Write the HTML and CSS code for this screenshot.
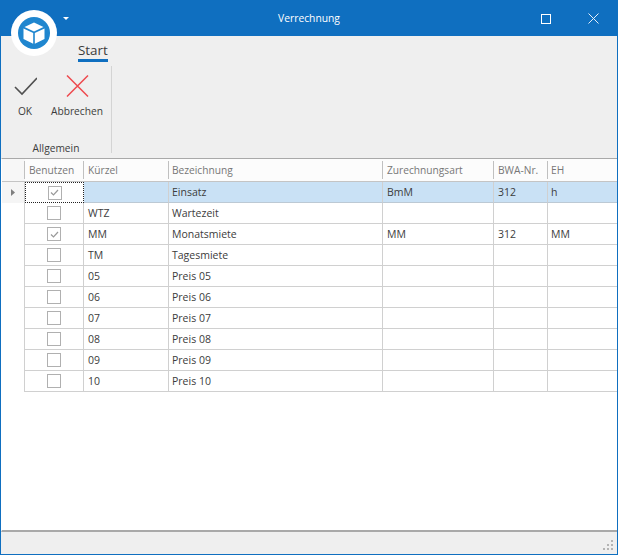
FILE: index.html
```html
<!DOCTYPE html>
<html lang="de">
<head>
  <meta charset="UTF-8" />
  <title>Verrechnung</title>
  <link rel="stylesheet" href="styles.css">
</head>
<body>
  <div class="window">
    <div class="titlebar">
      <svg class="qat-arrow" width="6" height="3" viewBox="0 0 6 3"><path d="M0 0h6L3 3z" fill="#fff"/></svg>
      <span class="title">Verrechnung</span>
      <div class="win-buttons">
        <svg width="10" height="10" viewBox="0 0 10 10"><rect x="0.5" y="0.5" width="9" height="9" fill="none" stroke="#fff"/></svg>
        <svg width="11" height="11" viewBox="0 0 11 11"><path d="M0.5 0.5l10 10M10.5 0.5l-10 10" fill="none" stroke="#e4eef8" stroke-width="1"/></svg>
      </div>
    </div>

    <div class="logo">
      <svg width="46" height="46" viewBox="0 0 46 46">
        <circle cx="23" cy="23" r="23" fill="#fff"/>
        <circle cx="23" cy="23" r="16" fill="#1f86cf"/>
        <path d="M23 12.500l9.500 4.500-9.500 4.500-9.500-4.500z" fill="#fff"/>
        <path d="M12.500 18.500l9.700 4.600v10.600l-9.700-4.600z" fill="#fff"/>
        <path d="M33.500 18.500l-9.700 4.600v10.600l9.700-4.600z" fill="#fff"/>
      </svg>
    </div>

    <div class="ribbon">
      <div class="tabs"><span class="tab">Start</span></div>
      <div class="group">
        <div class="commands">
          <div class="command">
            <svg width="24" height="22" viewBox="0 0 24 22"><path d="M2 12l7 7L24 3" fill="none" stroke="#505050" stroke-width="1.600"/></svg>
            <span>OK</span>
          </div>
          <div class="command">
            <svg width="24" height="22" viewBox="0 0 24 22"><path d="M2 0.500l21 21M23 0.500l-21 21" fill="none" stroke="#ee4a4f" stroke-width="1.500"/></svg>
            <span>Abbrechen</span>
          </div>
        </div>
        <div class="group-label">Allgemein</div>
      </div>
    </div>

    <div class="grid">
      <div class="row head">
        <div class="cell indicator"></div>
        <div class="cell">Benutzen</div>
        <div class="cell">Kürzel</div>
        <div class="cell">Bezeichnung</div>
        <div class="cell">Zurechnungsart</div>
        <div class="cell">BWA-Nr.</div>
        <div class="cell">EH</div>
      </div>
      <div class="row selected">
        <div class="cell indicator"><svg width="4" height="7" viewBox="0 0 4 7"><path d="M0 0l4 3.500L0 7z" fill="#7f7f7f"/></svg></div>
        <div class="cell check focus"><span class="box"><svg width="11" height="11" viewBox="0 0 11 11"><path d="M2 5.500l2.500 2.500L9 3" fill="none" stroke="#999" stroke-width="1.200"/></svg></span></div>
        <div class="cell"></div>
        <div class="cell">Einsatz</div>
        <div class="cell">BmM</div>
        <div class="cell">312</div>
        <div class="cell">h</div>
      </div>
      <div class="row">
        <div class="cell indicator"></div>
        <div class="cell check"><span class="box"></span></div>
        <div class="cell">WTZ</div>
        <div class="cell">Wartezeit</div>
        <div class="cell"></div><div class="cell"></div><div class="cell"></div>
      </div>
      <div class="row">
        <div class="cell indicator"></div>
        <div class="cell check"><span class="box"><svg width="11" height="11" viewBox="0 0 11 11"><path d="M2 5.500l2.500 2.500L9 3" fill="none" stroke="#999" stroke-width="1.200"/></svg></span></div>
        <div class="cell">MM</div>
        <div class="cell">Monatsmiete</div>
        <div class="cell">MM</div>
        <div class="cell">312</div>
        <div class="cell">MM</div>
      </div>
      <div class="row">
        <div class="cell indicator"></div>
        <div class="cell check"><span class="box"></span></div>
        <div class="cell">TM</div>
        <div class="cell">Tagesmiete</div>
        <div class="cell"></div><div class="cell"></div><div class="cell"></div>
      </div>
      <div class="row">
        <div class="cell indicator"></div>
        <div class="cell check"><span class="box"></span></div>
        <div class="cell">05</div>
        <div class="cell">Preis 05</div>
        <div class="cell"></div><div class="cell"></div><div class="cell"></div>
      </div>
      <div class="row">
        <div class="cell indicator"></div>
        <div class="cell check"><span class="box"></span></div>
        <div class="cell">06</div>
        <div class="cell">Preis 06</div>
        <div class="cell"></div><div class="cell"></div><div class="cell"></div>
      </div>
      <div class="row">
        <div class="cell indicator"></div>
        <div class="cell check"><span class="box"></span></div>
        <div class="cell">07</div>
        <div class="cell">Preis 07</div>
        <div class="cell"></div><div class="cell"></div><div class="cell"></div>
      </div>
      <div class="row">
        <div class="cell indicator"></div>
        <div class="cell check"><span class="box"></span></div>
        <div class="cell">08</div>
        <div class="cell">Preis 08</div>
        <div class="cell"></div><div class="cell"></div><div class="cell"></div>
      </div>
      <div class="row">
        <div class="cell indicator"></div>
        <div class="cell check"><span class="box"></span></div>
        <div class="cell">09</div>
        <div class="cell">Preis 09</div>
        <div class="cell"></div><div class="cell"></div><div class="cell"></div>
      </div>
      <div class="row">
        <div class="cell indicator"></div>
        <div class="cell check"><span class="box"></span></div>
        <div class="cell">10</div>
        <div class="cell">Preis 10</div>
        <div class="cell"></div><div class="cell"></div><div class="cell"></div>
      </div>
    </div>

    <div class="statusbar">
      <div class="grip">
        <i></i><i></i><i></i><i></i><i></i><i></i>
      </div>
    </div>
  </div>
</body>
</html>
```

FILE: styles.css
```css
html, body {
  margin: 0;
  height: 100%;
}
body {
  font-family: "Open Sans", "Noto Sans", Arial, sans-serif;
  font-size: 10.5px;
  color: #3c3c3c;
  background-color: #efefef;
}
.window {
  position: relative;
  box-sizing: border-box;
  width: 618px;
  height: 555px;
  display: flex;
  flex-direction: column;
  border: 1px solid #0f6fc0;
  border-top: none;
}
.titlebar {
  flex: none;
  height: 36px;
  margin: 0 -1px;
  background-color: #0f6fc0;
  color: #fff;
  display: flex;
  align-items: center;
  justify-content: center;
  position: relative;
}
.title {
  font-size: 10.3px;
  margin-top: -1px;
}
.qat-arrow {
  position: absolute;
  left: 63px;
  top: 17px;
}
.win-buttons {
  position: absolute;
  left: 541px;
  top: 13px;
  display: flex;
  align-items: center;
  gap: 37px;
}
.logo {
  position: absolute;
  left: 10px;
  top: 10px;
  width: 46px;
  height: 46px;
}
.ribbon {
  flex: none;
  height: 122px;
  display: flex;
  flex-direction: column;
}
.tabs {
  flex: none;
  height: 30px;
  padding-left: 77px;
  box-sizing: border-box;
}
.tab {
  display: inline-block;
  font-size: 13.4px;
  line-height: 18px;
  margin-top: 5px;
  border-bottom: 3px solid #0f6fc0;
}
.group {
  flex: none;
  width: 110px;
  height: 87px;
  border-right: 1px solid #d4d4d4;
  display: flex;
  flex-direction: column;
}
.commands {
  flex: none;
  display: flex;
  height: 75px;
  padding-top: 9px;
  box-sizing: border-box;
  padding-left: 12px;
  gap: 14px;
  font-size: 10.2px;
}
.command {
  display: flex;
  flex-direction: column;
  align-items: center;
  gap: 7px;
}
.command span {
  line-height: 14px;
}
.command:first-child {
  width: 24px;
}
.group-label {
  flex: none;
  text-align: center;
  font-size: 10.2px;
  line-height: 14px;
  margin-top: 0;
}
.grid {
  flex: 1;
  background-color: #fff;
  border-top: 1px solid #a9a9a9;
  border-bottom: 2px solid #a9a9a9;
  border-left: 1px solid #fff;
  overflow: hidden;
}
.row {
  display: grid;
  grid-template-columns: 23px 59px 85px 214px 111px 54px 1fr;
  height: 21px;
}
.row.head {
  height: 23px;
  color: #777;
  font-size: 10.2px;
}
.cell {
  box-sizing: border-box;
  border-right: 1px solid #d0d0d0;
  border-bottom: 1px solid #d0d0d0;
  padding-left: 3px;
  line-height: 20px;
  white-space: nowrap;
  overflow: hidden;
}
.cell:nth-child(2),
.cell:nth-child(3),
.cell:nth-child(5),
.cell:nth-child(6) {
  padding-left: 4px;
}
.head .cell {
  line-height: 22px;
  border-right: none;
  border-bottom-color: #c4c4c4;
  background: linear-gradient(#c0c0c0, #c0c0c0) right 2px / 1px 18px no-repeat #fcfcfc;
}
.selected .cell {
  background-color: #c9e1f5;
  border-bottom-color: #bcc9d4;
}
.cell:last-child {
  border-right: none;
}
.head .cell:last-child {
  background: #fcfcfc;
}
.row .cell.indicator {
  background-color: #fff;
  border-bottom: none;
  padding: 0;
  display: flex;
  align-items: center;
  justify-content: center;
}
.row.head .cell.indicator {
  background: linear-gradient(#c0c0c0, #c0c0c0) right 2px / 1px 18px no-repeat #f7f7f7;
  border-bottom: 1px solid #c4c4c4;
}
.row.selected .cell.indicator {
  background-color: #f5f5f5;
  border-right: 1px solid #d0d0d0;
}
.cell.check {
  display: flex;
  align-items: center;
  justify-content: center;
  padding: 0;
}
.selected .cell.focus {
  background-color: #fff;
  border: 1px dotted #222;
}
.box {
  box-sizing: border-box;
  width: 14px;
  height: 14px;
  border: 1px solid #b0b0b0;
  background-color: #fff;
  display: flex;
  align-items: center;
  justify-content: center;
}
.statusbar {
  flex: none;
  height: 22px;
  display: flex;
  justify-content: flex-end;
  align-items: flex-end;
}
.grip {
  display: grid;
  grid-template-columns: repeat(3, 2px);
  grid-template-rows: repeat(3, 2px);
  gap: 2px;
  margin: 0 4px 4px 0;
}
.grip i {
  background-color: #b4b4b4;
}
.grip i:nth-child(1) {
  grid-column: 3;
  grid-row: 1;
}
.grip i:nth-child(2) {
  grid-column: 2;
  grid-row: 2;
}
.grip i:nth-child(3) {
  grid-column: 3;
  grid-row: 2;
}
.grip i:nth-child(4) {
  grid-column: 1;
  grid-row: 3;
}
.grip i:nth-child(5) {
  grid-column: 2;
  grid-row: 3;
}
.grip i:nth-child(6) {
  grid-column: 3;
  grid-row: 3;
}
```
